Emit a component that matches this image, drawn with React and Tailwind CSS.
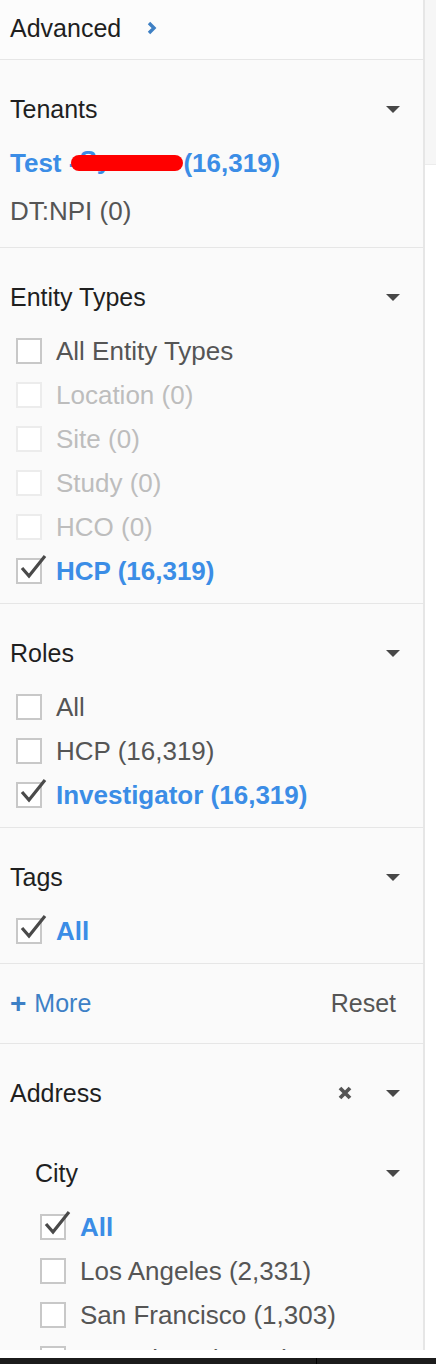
import React from 'react';

const BLUE = 'text-[#3b8de6]';

const Caret = () => (
  <span className="block w-0 h-0 border-l-[7px] border-r-[7px] border-t-[7px] border-l-transparent border-r-transparent border-t-[#474747]" />
);

const Checkbox = ({ checked, disabled }) => (
  <span
    className={`relative block w-[26px] h-[26px] shrink-0 border-2 bg-white ${
      disabled ? 'border-[#ececec]' : 'border-[#c8c8c8]'
    }`}
  >
    {checked && (
      <svg className="absolute left-[2px] top-[-7px]" width="28" height="28" viewBox="0 0 28 28">
        <polyline points="2,15 9,23 25,3" fill="none" stroke="#4a4a4a" strokeWidth="3.2" />
      </svg>
    )}
  </span>
);

const Item = ({ label, checked, disabled, indent }) => (
  <div className={`h-[44px] flex items-center gap-[14px] ${indent ? 'pl-[40px]' : 'pl-[16px]'}`}>
    <Checkbox checked={checked} disabled={disabled} />
    <span
      className={`text-[26px] leading-none whitespace-nowrap ${
        checked ? `${BLUE} font-bold` : disabled ? 'text-[#bdbdbd]' : 'text-[#555]'
      }`}
    >
      {label}
    </span>
  </div>
);

const Header = ({ title, extra }) => (
  <div className="h-[50px] flex items-center justify-between pl-[10px] pr-[23px]">
    <span className="text-[25px] leading-none text-[#1f1f1f]">{title}</span>
    <div className="flex items-center gap-[34px]">
      {extra}
      <Caret />
    </div>
  </div>
);

const Section = ({ children, pb = 'pb-[10px]' }) => (
  <div className={`border-t border-[#e6e6e6] pt-[24px] ${pb}`}>{children}</div>
);

export default function App() {
  return (
    <div className="w-[436px] h-[1364px] overflow-hidden flex flex-col bg-white" style={{ fontFamily: '"Liberation Sans", Arial, sans-serif' }}>
      <div className="h-[1350px] flex overflow-hidden">
        {/* filter panel */}
        <div className="w-[423px] shrink-0 bg-[#fafafa]">
          <div className="h-[59px] flex items-center gap-[26px] pl-[10px] pb-[3px] bg-[#fcfcfc]">
            <span className="text-[25px] leading-none text-[#1f1f1f]">Advanced</span>
            <svg width="10" height="14" viewBox="0 0 10 14">
              <polyline points="2,2 7,7 2,12" fill="none" stroke="#3f80c4" strokeWidth="3.4" />
            </svg>
          </div>

          <Section pb="pb-[12px]">
            <Header title="Tenants" />
            <div className="mt-[5px]">
              <div className="h-[48px] flex items-center pl-[10px]">
                <span className={`text-[26px] leading-none font-bold ${BLUE} whitespace-nowrap`}>
                  Test -
                  <span className="relative inline-block w-[106px] h-[16px] align-baseline">
                    <span className="absolute left-[2px] top-[-9px]">Sy</span>
                    <span className="absolute left-[-6px] right-0 top-[-1px] h-[16px] rounded-full bg-[#ff0000]" />
                  </span>
                  (16,319)
                </span>
              </div>
              <div className="h-[48px] flex items-center pl-[10px]">
                <span className="text-[26px] leading-none text-[#555]">DT:NPI (0)</span>
              </div>
            </div>
          </Section>

          <Section>
            <Header title="Entity Types" />
            <div className="mt-[7px]">
              <Item label="All Entity Types" />
              <Item label="Location (0)" disabled />
              <Item label="Site (0)" disabled />
              <Item label="Study (0)" disabled />
              <Item label="HCO (0)" disabled />
              <Item label="HCP (16,319)" checked />
            </div>
          </Section>

          <Section>
            <Header title="Roles" />
            <div className="mt-[7px]">
              <Item label="All" />
              <Item label="HCP (16,319)" />
              <Item label="Investigator (16,319)" checked />
            </div>
          </Section>

          <Section>
            <Header title="Tags" />
            <div className="mt-[7px]">
              <Item label="All" checked />
            </div>
          </Section>

          <div className="border-t border-[#e6e6e6] h-[80px] flex items-center justify-between pl-[10px] pr-[27px]">
            <span className="flex items-center gap-[8px] text-[25px] leading-none text-[#3d80c6]">
              <span className="font-bold text-[28px]">+</span>
              More
            </span>
            <span className="text-[25px] leading-none text-[#555]">Reset</span>
          </div>

          <Section>
            <Header
              title="Address"
              extra={
                <svg width="14" height="14" viewBox="0 0 14 14">
                  <path d="M2 2 L12 12 M12 2 L2 12" stroke="#555" strokeWidth="3.8" />
                </svg>
              }
            />
            <div className="mt-[30px] h-[50px] flex items-center justify-between pl-[35px] pr-[23px]">
              <span className="text-[25px] leading-none text-[#1f1f1f]">City</span>
              <Caret />
            </div>
            <div className="mt-[7px]">
              <Item label="All" checked indent />
              <Item label="Los Angeles (2,331)" indent />
              <Item label="San Francisco (1,303)" indent />
              <Item label="San Diego (1,196)" indent />
            </div>
          </Section>
        </div>

        {/* panel edge */}
        <div className="w-[2px] shrink-0 bg-[#e6e6e6]" />
        <div className="flex-1 flex flex-col">
          <div className="h-[165px] bg-[#f6f6f6] border-b border-[#ececec]" />
          <div className="flex-1 bg-white" />
        </div>
      </div>
      <div className="h-[8px] bg-white" />
      <div className="flex-1 flex bg-[#1c1c1c]">
        <div className="w-[316px]" />
        <div className="w-px bg-black" />
      </div>
    </div>
  );
}
